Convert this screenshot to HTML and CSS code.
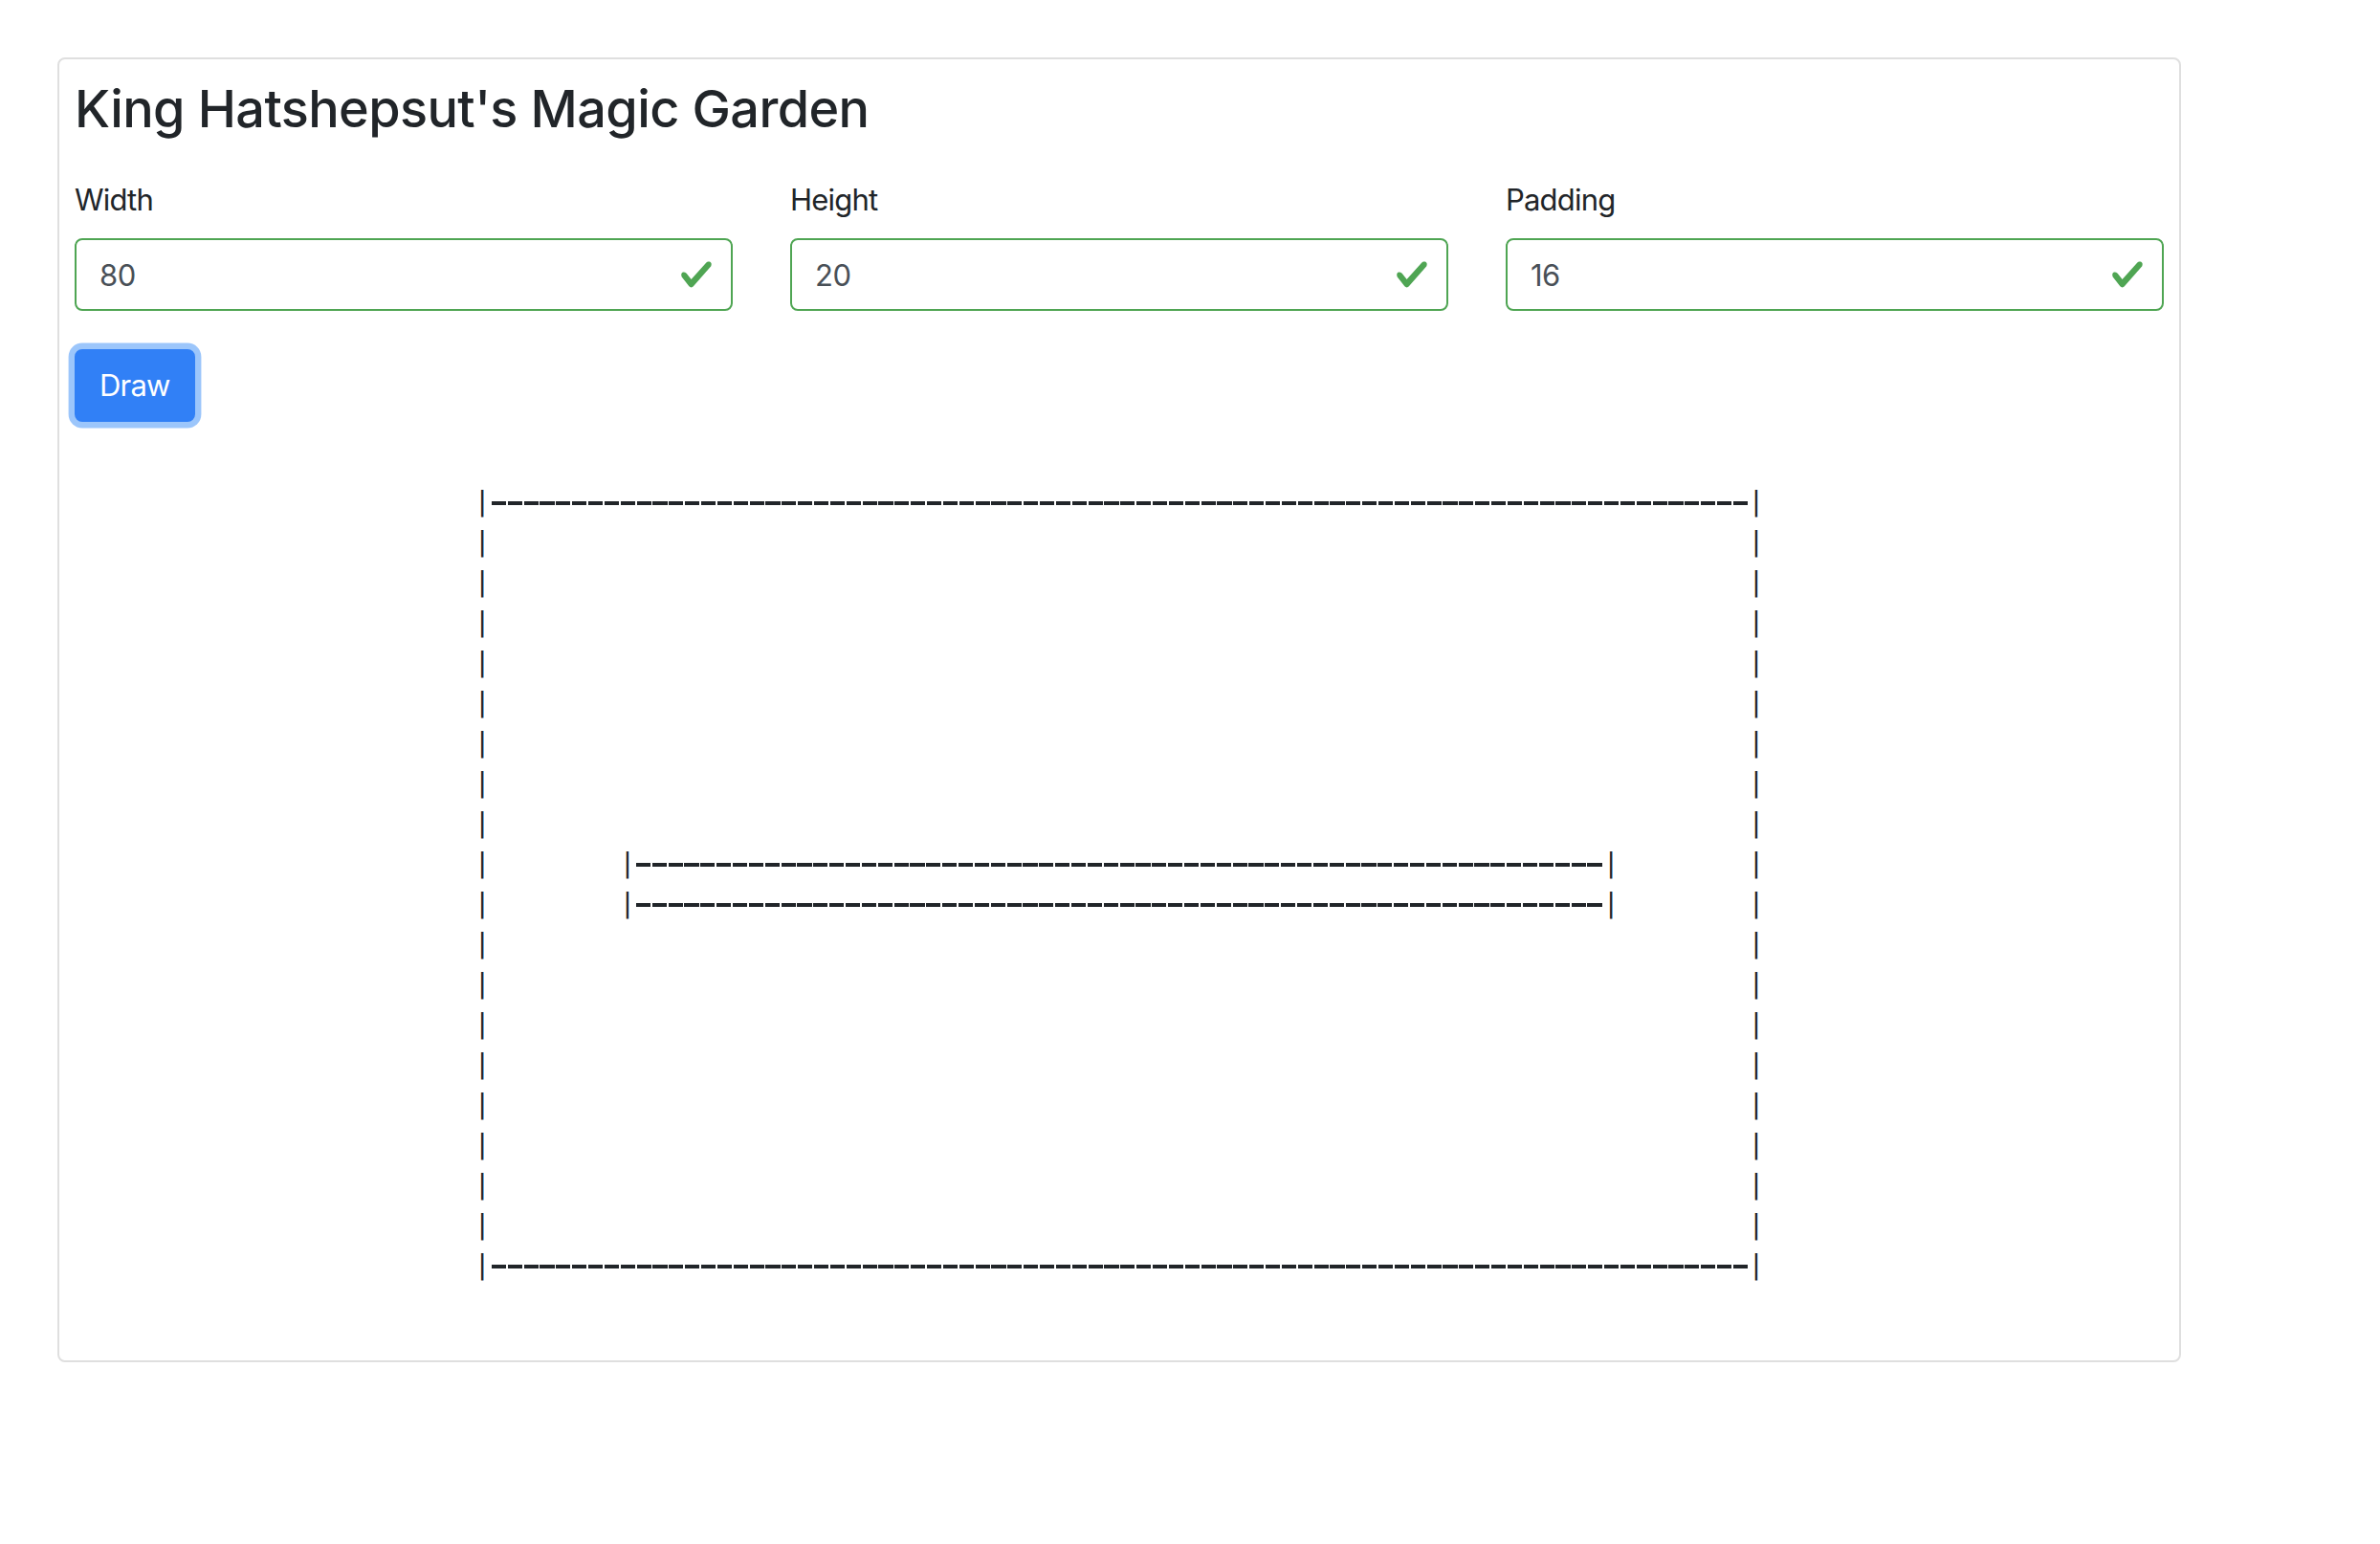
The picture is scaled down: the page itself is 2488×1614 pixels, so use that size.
FILE: index.html
```html
<!DOCTYPE html>
<html lang="en">
<head>
<meta charset="utf-8">
<title>King Hatshepsut's Magic Garden</title>
<link rel="stylesheet" href="styles.css">
</head>
<body>
<div class="page">
  <div class="card">
    <h3 class="title">King Hatshepsut's Magic Garden</h3>
    <form class="fields">
      <div class="field">
        <label class="label" for="w">Width</label>
        <div class="input-wrap">
          <input class="input" id="w" type="text" value="80">
          <svg class="valid-icon" viewBox="0 0 8 8" width="36" height="36"><path d="M2.3 6.73L.6 4.53c-.4-1.04.46-1.4 1.1-.8l1.1 1.4 3.4-3.8c.6-.63 1.6-.27 1.2.7l-4 4.6c-.43.5-.8.4-1.1.1z"/></svg>
        </div>
      </div>
      <div class="field">
        <label class="label" for="h">Height</label>
        <div class="input-wrap">
          <input class="input" id="h" type="text" value="20">
          <svg class="valid-icon" viewBox="0 0 8 8" width="36" height="36"><path d="M2.3 6.73L.6 4.53c-.4-1.04.46-1.4 1.1-.8l1.1 1.4 3.4-3.8c.6-.63 1.6-.27 1.2.7l-4 4.6c-.43.5-.8.4-1.1.1z"/></svg>
        </div>
      </div>
      <div class="field">
        <label class="label" for="p">Padding</label>
        <div class="input-wrap">
          <input class="input" id="p" type="text" value="16">
          <svg class="valid-icon" viewBox="0 0 8 8" width="36" height="36"><path d="M2.3 6.73L.6 4.53c-.4-1.04.46-1.4 1.1-.8l1.1 1.4 3.4-3.8c.6-.63 1.6-.27 1.2.7l-4 4.6c-.43.5-.8.4-1.1.1z"/></svg>
        </div>
      </div>
    </form>
    <button class="btn" type="button">Draw</button>
    <div class="art-wrap">
      <div class="art">
        <div class="row">|<span class="dash">------------------------------------------------------------------------------</span>|</div>
        <div class="row">|                                                                              |</div>
        <div class="row">|                                                                              |</div>
        <div class="row">|                                                                              |</div>
        <div class="row">|                                                                              |</div>
        <div class="row">|                                                                              |</div>
        <div class="row">|                                                                              |</div>
        <div class="row">|                                                                              |</div>
        <div class="row">|                                                                              |</div>
        <div class="row">|        |<span class="dash">------------------------------------------------------------</span>|        |</div>
        <div class="row">|        |<span class="dash">------------------------------------------------------------</span>|        |</div>
        <div class="row">|                                                                              |</div>
        <div class="row">|                                                                              |</div>
        <div class="row">|                                                                              |</div>
        <div class="row">|                                                                              |</div>
        <div class="row">|                                                                              |</div>
        <div class="row">|                                                                              |</div>
        <div class="row">|                                                                              |</div>
        <div class="row">|                                                                              |</div>
        <div class="row">|<span class="dash">------------------------------------------------------------------------------</span>|</div>
      </div>
    </div>
  </div>
</div>
</body>
</html>
```
FILE: styles.css
```css
* { box-sizing: border-box; }

html, body {
  margin: 0;
  padding: 0;
  background: #ffffff;
}

body {
  font-family: Inter, "Noto Sans", "Liberation Sans", sans-serif;
  color: #212529;
}

.page {
  padding: 60px 0 0 60px;
}

.card {
  width: 2220px;
  border: 2px solid #dfdfdf;
  border-radius: 8px;
  padding: 16px;
  background: #fff;
}

.title {
  margin: 2px 0 38px 0;
  font-size: 54px;
  line-height: 67.2px;
  font-weight: 500;
  letter-spacing: -0.6px;
  color: #212529;
}

.fields {
  display: grid;
  grid-template-columns: repeat(3, 1fr);
  column-gap: 60px;
  margin: 0;
}

.field {
  display: flex;
  flex-direction: column;
}

.label {
  display: block;
  font-size: 31px;
  line-height: 48px;
  letter-spacing: -0.8px;
  margin-bottom: 16px;
  color: #212529;
}

.input-wrap {
  position: relative;
}

.input {
  display: block;
  width: 100%;
  height: 76px;
  padding: 12px 72px 12px 24px;
  font-family: inherit;
  font-size: 31px;
  line-height: 48px;
  letter-spacing: -0.5px;
  color: #495057;
  background: #fff;
  border: 2px solid #4fa553;
  border-radius: 8px;
  outline: none;
}

.valid-icon {
  position: absolute;
  right: 20px;
  top: 20px;
  width: 36px;
  height: 36px;
  fill: #4fa553;
}

.btn {
  display: block;
  margin-top: 40px;
  height: 76px;
  padding: 12px 24px;
  font-family: inherit;
  font-size: 31px;
  line-height: 48px;
  letter-spacing: -0.8px;
  color: #fff;
  background: #3180f6;
  border: 2px solid #3180f6;
  border-radius: 8px;
  box-shadow: 0 0 0 6.4px #9cc6fb;
  cursor: pointer;
}

.art-wrap {
  display: flex;
  justify-content: center;
  margin: 62.5px 0 62.5px 0;
}

.art {
  margin: 0;
  font-family: "DejaVu Sans Mono", monospace;
  font-size: 28px;
  line-height: 42px;
  color: #212529;
}

.row {
  height: 42px;
  white-space: pre;
}

.dash {
  display: inline-block;
  vertical-align: top;
  height: 42px;
  background-image: repeating-linear-gradient(90deg, transparent 0 0.9px, #212529 0.9px 16px, transparent 16px 16.857px);
  background-size: 100% 4px;
  background-repeat: no-repeat;
  background-position: 0 20.7px;
}
```
